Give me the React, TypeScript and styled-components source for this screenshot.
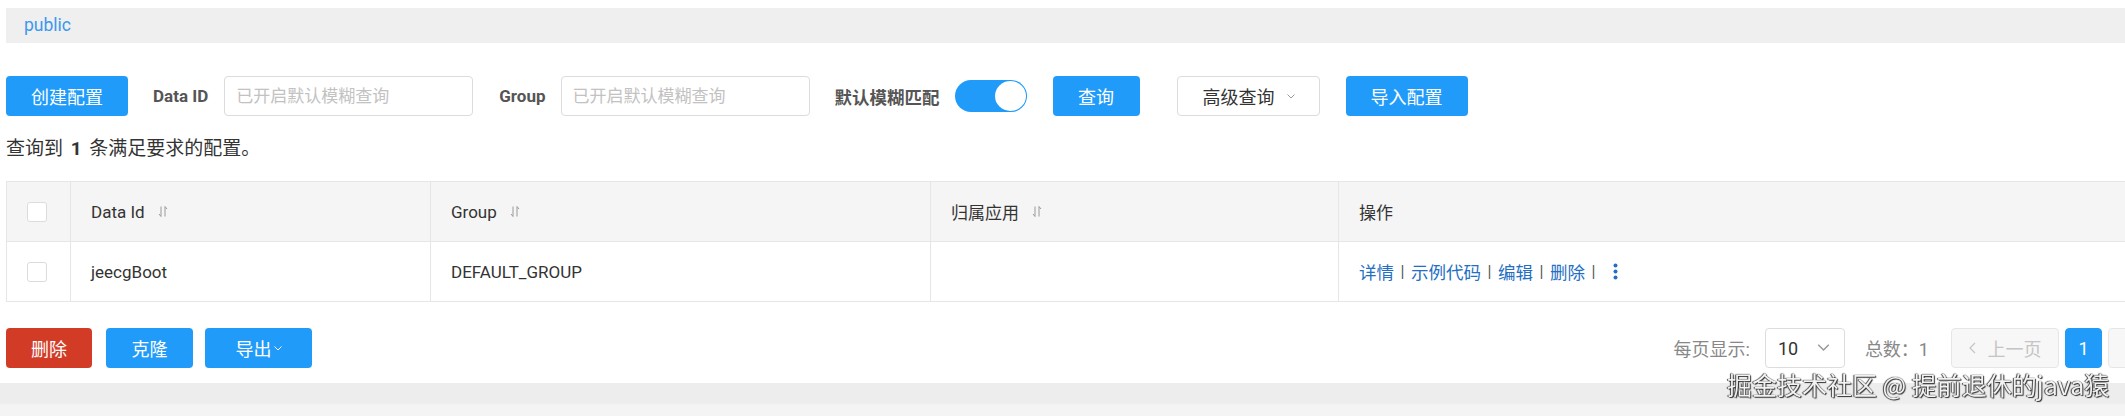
import React from 'react'
import styled, { createGlobalStyle } from 'styled-components'

const GlobalStyle = createGlobalStyle`
	html, body {
		margin: 0;
		padding: 0;
		background: #fff;
		overflow: hidden;
	}
	body {
		font-family: Roboto, "Noto Sans CJK SC", sans-serif;
		font-size: 17px;
		color: #333;
	}
	* { box-sizing: border-box; }
`

const Page = styled.div`
	width: 2222px;
	padding-top: 8px;
`

const Inner = styled.div`
	padding: 0 6px;
`

const PathBar = styled.div`
	height: 35px;
	line-height: 35px;
	background: #efefef;
	padding-left: 18px;
	color: #3d97ee;
	font-size: 17.5px;
`

const Toolbar = styled.div`
	display: flex;
	align-items: center;
	height: 40px;
	margin-top: 33px;
`

const Button = styled.button<{ $tone?: 'primary' | 'danger'; $w: number; $ml?: number }>`
	height: 40px;
	width: ${p => p.$w}px;
	margin-left: ${p => p.$ml || 0}px;
	border: none;
	border-radius: 4px;
	background: ${p => (p.$tone === 'danger' ? '#d23c26' : '#209bfa')};
	color: #fff;
	font-family: inherit;
	font-size: 18px;
	display: inline-flex;
	align-items: center;
	justify-content: center;
	gap: 2px;
	padding: 0;
	cursor: pointer;
`

const Label = styled.span<{ $ml: number; $size?: number }>`
	margin-left: ${p => p.$ml}px;
	font-weight: 700;
	color: #555;
	font-size: ${p => p.$size || 17}px;
	white-space: nowrap;
`

const Input = styled.input<{ $ml: number }>`
	margin-left: ${p => p.$ml}px;
	width: 249px;
	height: 40px;
	border: 1px solid #dcdcdc;
	border-radius: 4px;
	padding: 0 11px;
	font-family: inherit;
	font-size: 17px;
	outline: none;
	&::placeholder {
		color: #c2c2c2;
	}
`

const Switch = styled.div`
	margin-left: 15px;
	width: 72px;
	height: 32px;
	border-radius: 16px;
	background: #209bfa;
	display: flex;
	align-items: center;
	justify-content: flex-end;
	padding-right: 1px;
`

const Knob = styled.span`
	width: 31px;
	height: 30px;
	border-radius: 50%;
	background: #fff;
`

const DropButton = styled.div`
	margin-left: 37px;
	width: 143px;
	height: 40px;
	border: 1px solid #dcdcdc;
	border-radius: 4px;
	background: #fff;
	display: flex;
	align-items: center;
	padding-left: 25px;
	gap: 12px;
	color: #333;
	font-size: 18px;
`

const Summary = styled.div`
	margin-top: 21px;
	height: 24px;
	line-height: 24px;
	font-size: 19px;
	color: #333;
	b {
		font-weight: 700;
		margin: 0 3px;
	}
`

const Table = styled.table`
	margin-top: 20px;
	width: 100%;
	border-collapse: collapse;
	table-layout: fixed;
	font-size: 17px;

	th, td {
		border: 1px solid #e6e6e6;
		height: 60px;
		padding: 0 0 0 20px;
		text-align: left;
		font-weight: 400;
		color: #333;
	}
	th {
		background: #f5f5f5;
	}
	th.check, td.check {
		padding: 0;
		text-align: center;
	}
`

const Check = styled.span`
	display: inline-block;
	vertical-align: middle;
	width: 20px;
	height: 20px;
	border: 1px solid #dcdcdc;
	border-radius: 3px;
	background: #fff;
	margin-right: 4px;
`

const HeadText = styled.span`
	display: inline-flex;
	align-items: center;
	gap: 13px;
`

const Actions = styled.div`
	display: flex;
	align-items: center;
	color: #246fc3;
	font-size: 17.5px;
	white-space: nowrap;
`

const Sep = styled.span`
	display: inline-block;
	width: 17px;
	text-align: center;
	color: #555;
	font-size: 16px;
`

const More = styled.span`
	display: inline-flex;
	margin-left: 11px;
`

const BottomBar = styled.div`
	margin-top: 26px;
	display: flex;
	align-items: center;
	height: 40px;
`

const Pager = styled.div`
	margin-left: auto;
	display: flex;
	align-items: center;
	color: #888;
	font-size: 18px;
`

const PageSize = styled.div`
	margin-left: 15px;
	width: 80px;
	height: 40px;
	border: 1px solid #dcdcdc;
	border-radius: 4px;
	display: flex;
	align-items: center;
	justify-content: space-between;
	padding: 0 14px 0 12px;
	color: #333;
`

const Total = styled.span`
	margin-left: 20px;
`

const PageButton = styled.div<{ $active?: boolean; $w: number; $ml: number }>`
	margin-left: ${p => p.$ml}px;
	width: ${p => p.$w}px;
	height: 40px;
	border-radius: 4px;
	border: 1px solid ${p => (p.$active ? '#209bfa' : '#e6e6e6')};
	background: ${p => (p.$active ? '#209bfa' : '#f7f7f7')};
	color: ${p => (p.$active ? '#fff' : '#c4c4c4')};
	display: flex;
	align-items: center;
	justify-content: center;
	gap: 12px;
`

const Footer = styled.div`
	margin-top: 15px;
	height: 40px;
	background: linear-gradient(#ededed 0, #ededed 20px, #f4f4f4 22px);
`

const Watermark = styled.div`
	position: fixed;
	left: 1727px;
	top: 366px;
	font-size: 25px;
	font-family: "Noto Sans CJK SC", sans-serif;
	color: #f2f2f2;
	text-shadow: 0 0 1px #222, 1px 1px 1px #333, -1px 0 1px #444;
	white-space: nowrap;
`

const SortIcon = () => (
	<svg width="10" height="13" viewBox="0 0 10 13" fill="none" stroke="#9a9a9a" strokeWidth="1">
		<path d="M3 1.5V11.5L1 9" />
		<path d="M7 11.5V1.5L9 4" />
	</svg>
)

const Chevron = ({ w = 8, color = '#999' }: { w?: number; color?: string }) => (
	<svg width={w} height={w / 2 + 1} viewBox="0 0 8 5" fill="none" stroke={color} strokeWidth="1">
		<path d="M0.5 0.5L4 4L7.5 0.5" />
	</svg>
)

const Kebab = () => (
	<svg width="5" height="17" viewBox="0 0 5 17" fill="#246fc3">
		<circle cx="2.5" cy="2.5" r="2" />
		<circle cx="2.5" cy="8.5" r="2" />
		<circle cx="2.5" cy="14.5" r="2" />
	</svg>
)

const columns = [
	{ title: 'Data Id', sort: true },
	{ title: 'Group', sort: true },
	{ title: '归属应用', sort: true },
	{ title: '操作', sort: false },
]

const actions = ['详情', '示例代码', '编辑', '删除']

export default function App() {
	return (
		<Page>
			<GlobalStyle />
			<Inner>
				<PathBar>public</PathBar>

				<Toolbar>
					<Button $w={122}>创建配置</Button>
					<Label $ml={25}>Data ID</Label>
					<Input $ml={16} placeholder="已开启默认模糊查询" />
					<Label $ml={26}>Group</Label>
					<Input $ml={15} placeholder="已开启默认模糊查询" />
					<Label $ml={25} $size={17.5}>默认模糊匹配</Label>
					<Switch><Knob /></Switch>
					<Button $w={87} $ml={26}>查询</Button>
					<DropButton>高级查询 <Chevron /></DropButton>
					<Button $w={122} $ml={26}>导入配置</Button>
				</Toolbar>

				<Summary>查询到 <b>1</b> 条满足要求的配置。</Summary>

				<Table>
					<colgroup>
						<col style={{ width: 64 }} />
						<col style={{ width: 360 }} />
						<col style={{ width: 500 }} />
						<col style={{ width: 408 }} />
						<col />
					</colgroup>
					<thead>
						<tr>
							<th className="check"><Check /></th>
							{columns.map(c => (
								<th key={c.title}>
									<HeadText>{c.title}{c.sort && <SortIcon />}</HeadText>
								</th>
							))}
						</tr>
					</thead>
					<tbody>
						<tr>
							<td className="check"><Check /></td>
							<td>jeecgBoot</td>
							<td>DEFAULT_GROUP</td>
							<td></td>
							<td>
								<Actions>
									{actions.map(a => (
										<React.Fragment key={a}>
											{a}<Sep>|</Sep>
										</React.Fragment>
									))}
									<More><Kebab /></More>
								</Actions>
							</td>
						</tr>
					</tbody>
				</Table>

				<BottomBar>
					<Button $tone="danger" $w={86}>删除</Button>
					<Button $w={87} $ml={14}>克隆</Button>
					<Button $w={107} $ml={12}>导出<Chevron color="#fff" /></Button>

					<Pager>
						每页显示:
						<PageSize>10 <Chevron w={13} /></PageSize>
						<Total>总数：1</Total>
						<PageButton $w={108} $ml={22}>
							<svg width="7" height="12" viewBox="0 0 7 12" fill="none" stroke="#c4c4c4" strokeWidth="1.2"><path d="M6 1L1 6L6 11" /></svg>
							上一页
						</PageButton>
						<PageButton $active $w={37} $ml={6}>1</PageButton>
						<PageButton $w={108} $ml={6}>
							下一页
							<svg width="7" height="12" viewBox="0 0 7 12" fill="none" stroke="#c4c4c4" strokeWidth="1.2"><path d="M1 1L6 6L1 11" /></svg>
						</PageButton>
					</Pager>
				</BottomBar>
			</Inner>
			<Footer />
			<Watermark>掘金技术社区 @ 提前退休的java猿</Watermark>
		</Page>
	)
}
